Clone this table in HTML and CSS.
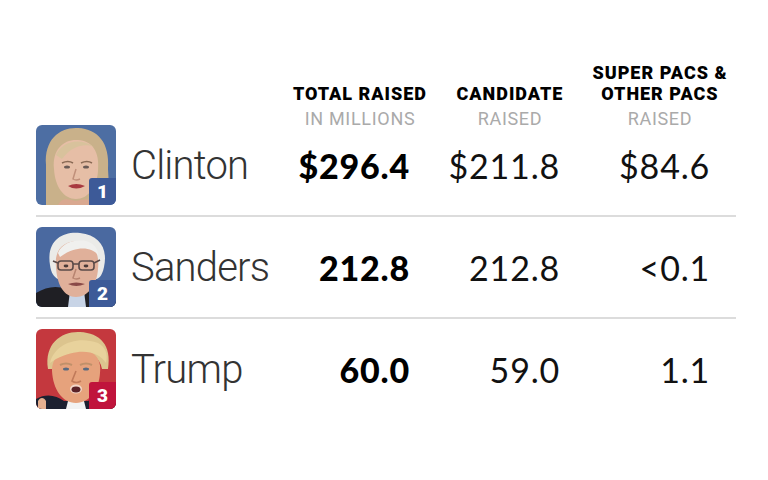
FILE: index.html
```html
<!DOCTYPE html>
<html>
<head>
<meta charset="utf-8">
<link rel="stylesheet" href="styles.css">
</head>
<body>
<div class="table">
  <div class="head">
    <div class="hcell-spacer"></div>
    <div class="hcell"><div class="ht">TOTAL RAISED</div><div class="hs">IN MILLIONS</div></div>
    <div class="hcell"><div class="ht">CANDIDATE</div><div class="hs">RAISED</div></div>
    <div class="hcell"><div class="ht">SUPER PACS &amp;<br>OTHER PACS</div><div class="hs">RAISED</div></div>
  </div>

  <div class="row first">
    <div class="who">
      <div class="photo">
        <svg viewBox="0 0 80 80" width="80" height="80">
          <rect width="80" height="80" fill="#4d6ea3"/>
          <path d="M10 80 L10 40 C8 14 24 2 42 3 C62 4 74 18 72 44 L74 80 Z" fill="#c9b18a"/>
          <path d="M18 44 C16 24 28 14 42 15 C56 16 64 26 62 46 C61 62 52 74 40 74 C28 74 19 62 18 44 Z" fill="#e6bea6"/>
          <path d="M20 30 C26 16 44 12 58 22 C50 18 36 20 26 34 Z" fill="#d8c29c"/>
          <path d="M26 38 Q32 35 37 38" stroke="#8a6a55" stroke-width="1.5" fill="none"/>
          <path d="M45 38 Q51 35 56 38" stroke="#8a6a55" stroke-width="1.5" fill="none"/>
          <ellipse cx="31" cy="42" rx="3" ry="1.6" fill="#6a5a55"/>
          <ellipse cx="50" cy="42" rx="3" ry="1.6" fill="#6a5a55"/>
          <path d="M40 44 L37 54 Q40 56 44 54" stroke="#c0907a" stroke-width="1.5" fill="none"/>
          <path d="M32 61 Q40 57 49 61 Q40 66 32 61 Z" fill="#a83a40"/>
          <path d="M22 80 C26 72 32 74 40 76 C48 74 54 72 58 80 Z" fill="#d9a890"/>
        </svg>
        <span class="badge blue">1</span>
      </div>
      <span class="name">Clinton</span>
    </div>
    <div class="val b">$296.4</div>
    <div class="val">$211.8</div>
    <div class="val">$84.6</div>
  </div>

  <div class="row">
    <div class="who">
      <div class="photo">
        <svg viewBox="0 0 80 80" width="80" height="80">
          <rect width="80" height="80" fill="#4a69a0"/>
          <path d="M0 80 L0 66 C10 60 20 58 30 62 L50 62 C60 56 72 56 80 60 L80 80 Z" fill="#1f1f24"/>
          <path d="M32 80 L34 64 L48 64 L50 80 Z" fill="#c8d4e6"/>
          <path d="M14 38 C10 14 26 4 44 6 C64 8 72 22 68 40 C66 50 62 52 60 52 L22 52 C18 50 15 46 14 38 Z" fill="#ebebe8"/>
          <path d="M20 40 C18 22 28 14 42 14 C56 14 64 24 62 42 C61 58 52 70 40 70 C28 70 21 58 20 40 Z" fill="#e0b09a"/>
          <path d="M22 26 C26 16 38 12 50 14 C58 16 62 22 62 28 C56 20 40 18 24 30 Z" fill="#f0f0ee"/>
          <rect x="22" y="34" width="15" height="9" rx="3" fill="none" stroke="#5a4a48" stroke-width="1.6"/>
          <rect x="43" y="34" width="15" height="9" rx="3" fill="none" stroke="#5a4a48" stroke-width="1.6"/>
          <path d="M37 37 L43 37 M22 36 L17 34 M58 36 L64 33" stroke="#5a4a48" stroke-width="1.6"/>
          <ellipse cx="30" cy="39" rx="2.4" ry="1.4" fill="#4a3a38"/>
          <ellipse cx="50" cy="39" rx="2.4" ry="1.4" fill="#4a3a38"/>
          <path d="M40 42 L37 51 Q40 53 44 51" stroke="#b88470" stroke-width="1.5" fill="none"/>
          <path d="M32 57 Q40 54 49 57 Q40 61 32 57 Z" fill="#8a4a48"/>
        </svg>
        <span class="badge blue">2</span>
      </div>
      <span class="name">Sanders</span>
    </div>
    <div class="val b">212.8</div>
    <div class="val">212.8</div>
    <div class="val">&lt;0.1</div>
  </div>

  <div class="row">
    <div class="who">
      <div class="photo">
        <svg viewBox="0 0 80 80" width="80" height="80">
          <rect width="80" height="80" fill="#c4383e"/>
          <path d="M0 80 L0 70 C10 64 20 66 28 72 L52 72 C62 66 72 64 80 68 L80 80 Z" fill="#1c2030"/>
          <path d="M30 80 L32 72 L48 72 L50 80 Z" fill="#f2f2f2"/>
          <path d="M12 40 C8 14 26 2 44 3 C64 4 76 16 72 40 L66 40 C64 28 54 22 40 22 C26 22 18 30 18 40 Z" fill="#dcc48e"/>
          <path d="M16 42 C16 26 28 20 42 20 C58 20 66 30 64 44 C63 60 54 74 40 74 C26 74 17 60 16 42 Z" fill="#e6a27c"/>
          <path d="M14 34 C18 16 40 6 62 14 C70 18 72 26 70 34 C62 22 44 18 20 30 Z" fill="#e8d29c"/>
          <path d="M24 36 Q30 33 36 36" stroke="#c0906a" stroke-width="2" fill="none"/>
          <path d="M44 36 Q50 33 56 36" stroke="#c0906a" stroke-width="2" fill="none"/>
          <ellipse cx="30" cy="40" rx="3" ry="1.5" fill="#5a6a80"/>
          <ellipse cx="50" cy="40" rx="3" ry="1.5" fill="#5a6a80"/>
          <path d="M40 42 L36 52 Q40 55 45 52" stroke="#c07a5a" stroke-width="1.6" fill="none"/>
          <ellipse cx="40" cy="60" rx="6" ry="4.5" fill="#f2d6c8"/>
          <ellipse cx="40" cy="60.5" rx="4.5" ry="3" fill="#5a2228"/>
          <path d="M2 80 L2 72 C4 68 8 68 10 72 L10 80 Z" fill="#e6b090"/>
        </svg>
        <span class="badge red">3</span>
      </div>
      <span class="name">Trump</span>
    </div>
    <div class="val b">60.0</div>
    <div class="val">59.0</div>
    <div class="val">1.1</div>
  </div>
</div>
</body>
</html>
```
FILE: styles.css
```css
html, body {
  margin: 0;
  padding: 0;
  background: #fff;
}
body {
  width: 768px;
  height: 480px;
  overflow: hidden;
}
.table {
  margin-left: 36px;
  width: 700px;
  padding-top: 62px;
}
.head {
  display: grid;
  grid-template-columns: 249px 150px 150px 150px;
  align-items: end;
  margin-bottom: -2px;
}
.hcell {
  text-align: center;
  font-family: Roboto, "Liberation Sans", sans-serif;
}
.ht {
  font-weight: 900;
  font-size: 18px;
  line-height: 21px;
  color: #000;
  letter-spacing: 1px;
}
.hs {
  font-weight: 400;
  font-size: 18px;
  line-height: 16px;
  margin-top: 7px;
  color: #aaa;
  letter-spacing: 0.7px;
}
.row {
  display: grid;
  grid-template-columns: 249px 150px 150px 150px;
  align-items: center;
  padding: 0 0 10px;
  border-bottom: 2px solid #dcdcdc;
  margin-top: 10px;
}
.row.first {
  margin-top: 0;
}
.row:last-child {
  border-bottom: none;
}
.who {
  display: flex;
  align-items: center;
}
.photo {
  position: relative;
  width: 80px;
  height: 80px;
  border-radius: 6px;
  overflow: hidden;
  flex: none;
}
.photo svg {
  display: block;
}
.badge {
  position: absolute;
  right: 0;
  bottom: 0;
  width: 27px;
  height: 27px;
  border-top-left-radius: 3px;
  color: #fff;
  font-family: Roboto, "Liberation Sans", sans-serif;
  font-weight: 900;
  font-size: 19px;
  line-height: 28px;
  text-align: center;
}
.badge.blue { background: #3d5a98; }
.badge.red { background: #c0143c; }
.name {
  margin-left: 15px;
  font-family: Roboto, "Liberation Sans", sans-serif;
  font-weight: 300;
  font-size: 40px;
  color: #333;
  letter-spacing: -0.8px;
}
.val {
  text-align: right;
  padding-right: 25px;
  font-family: Lato, "Liberation Sans", sans-serif;
  font-size: 34px;
  color: #111;
  letter-spacing: 0.8px;
}
.val.b {
  font-weight: 900;
  color: #000;
}
```
